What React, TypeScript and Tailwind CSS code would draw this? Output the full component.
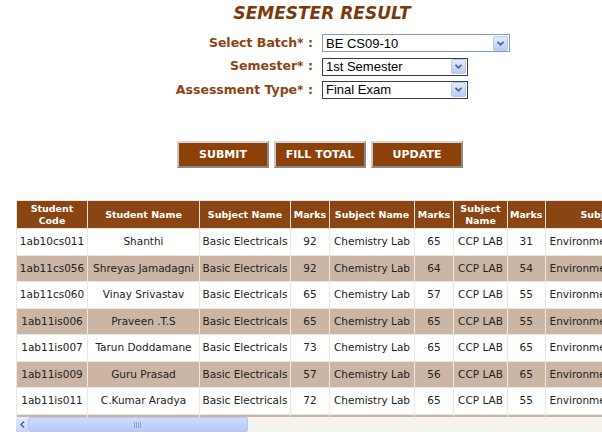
import type { FC } from "react";

const rows: string[][] = [
  ["1ab10cs011", "Shanthi", "92", "65", "31"],
  ["1ab11cs056", "Shreyas Jamadagni", "92", "64", "54"],
  ["1ab11cs060", "Vinay Srivastav", "65", "57", "55"],
  ["1ab11is006", "Praveen .T.S", "65", "65", "55"],
  ["1ab11is007", "Tarun Doddamane", "73", "65", "65"],
  ["1ab11is009", "Guru Prasad", "57", "56", "65"],
  ["1ab11is011", "C.Kumar Aradya", "72", "65", "55"],
  ["1ab11is012", "Manoj Kumar", "68", "60", "58"],
];

const ArrowBtn: FC = () => (
  <span className="flex h-[15px] w-[15px] items-center justify-center rounded-[2px] border border-[#b7c9ef] bg-gradient-to-b from-[#e2eafe] to-[#b9cdf7]">
    <svg width="7" height="5" viewBox="0 0 7 5">
      <path d="M0.5 0.8 L3.5 3.8 L6.5 0.8" fill="none" stroke="#4d6185" strokeWidth="1.6" />
    </svg>
  </span>
);

const FakeSelect: FC<{ value: string; width: string; light?: boolean }> = ({ value, width, light }) => (
  <div
    className={`flex h-[18px] items-center justify-between bg-white pl-[3px] pr-px font-normal ${width} border ${
      light ? "border-[#7f9db9]" : "border-[#3c3c3c]"
    }`}
  >
    <span className="text-[13px] leading-none text-black" style={{ fontFamily: '"Liberation Sans", Arial, sans-serif' }}>
      {value}
    </span>
    <ArrowBtn />
  </div>
);

const ActionButton: FC<{ label: string }> = ({ label }) => (
  <button className="h-[27px] w-[92px] border-2 border-t-[#d8d8d8] border-l-[#c8c8c8] border-b-[#8a8a8a] border-r-[#8a8a8a] bg-[#8b4108] text-[11px] font-bold text-white">
    {label}
  </button>
);

const headers = [
  { label: "Student\nCode", w: "w-[71px]" },
  { label: "Student Name", w: "w-[112px]" },
  { label: "Subject Name", w: "w-[91px]" },
  { label: "Marks", w: "w-[39px]" },
  { label: "Subject Name", w: "w-[85px]" },
  { label: "Marks", w: "w-[39px]" },
  { label: "Subject\nName", w: "w-[54px]" },
  { label: "Marks", w: "w-[36px]" },
  { label: "Subject Name", w: "w-[145px]" },
];

const cell = "whitespace-nowrap border border-[#efe6de] text-center";

export default function App() {
  return (
    <div className="h-[435px] w-[602px] overflow-hidden bg-white" style={{ fontFamily: '"DejaVu Sans", Verdana, sans-serif' }}>
      <h1 className="pt-[2px] text-center text-[17px] font-bold italic leading-[22px] text-[#7b3a0c]">
        <span className="pl-[42px]">SEMESTER RESULT</span>
      </h1>

      <div className="mt-[10px] grid grid-cols-[150px_auto] items-center gap-x-[9px] gap-y-[4.5px] pl-[163px] text-[12.5px] font-bold text-[#8b4513]">
        <span className="text-right">Select Batch* :</span>
        <FakeSelect value="BE CS09-10" width="w-[188px]" light />
        <span className="text-right">Semester* :</span>
        <FakeSelect value="1st Semester" width="w-[146px]" />
        <span className="text-right">Assessment Type* :</span>
        <FakeSelect value="Final Exam" width="w-[146px]" />
      </div>

      <div className="mt-[42px] flex gap-[5px] pl-[177px]">
        <ActionButton label="SUBMIT" />
        <ActionButton label="FILL TOTAL" />
        <ActionButton label="UPDATE" />
      </div>

      <div className="ml-[16px] mt-[32px] w-[700px]">
        <div className="h-[217px] overflow-hidden">
          <table className="table-fixed border-collapse text-[10.5px]">
            <thead>
              <tr className="h-[28px] bg-[#8b4513] text-white">
                {headers.map((h, i) => (
                  <th
                    key={i}
                    className={`${h.w} whitespace-pre-line border border-[#ece2d8] px-[2px] text-center text-[9.5px] leading-[12px] font-bold`}
                  >
                    {h.label}
                  </th>
                ))}
              </tr>
            </thead>
            <tbody>
              {rows.map((r, i) => (
                <tr key={i} className={`h-[26.5px] ${i % 2 === 1 ? "bg-[#cbb5a5]" : "bg-white"} text-[#222]`}>
                  <td className={cell}>{r[0]}</td>
                  <td className={cell}>{r[1]}</td>
                  <td className={cell}>Basic Electricals</td>
                  <td className={cell}>{r[2]}</td>
                  <td className={cell}>Chemistry Lab</td>
                  <td className={cell}>{r[3]}</td>
                  <td className={cell}>CCP LAB</td>
                  <td className={cell}>{r[4]}</td>
                  <td className="whitespace-nowrap border border-[#efe6de] pl-[4px] text-left">Environmental Studies</td>
                </tr>
              ))}
            </tbody>
          </table>
        </div>

        {/* horizontal scrollbar */}
        <div className="flex h-[15px] items-stretch bg-[#f4f3ee]">
          <div className="flex w-[12px] items-center justify-center bg-gradient-to-b from-[#e4ecfd] to-[#c3d4f8]">
            <svg width="5" height="7" viewBox="0 0 5 7">
              <path d="M4 0.5 L1 3.5 L4 6.5" fill="none" stroke="#4d6185" strokeWidth="1.5" />
            </svg>
          </div>
          <div className="flex w-[220px] items-center justify-center rounded-[2px] border border-[#b4c8f2] bg-gradient-to-b from-[#cddcfd] to-[#b8cbf5]">
            <svg width="8" height="6" viewBox="0 0 8 6">
              <path d="M0.5 0 V6 M2.5 0 V6 M4.5 0 V6 M6.5 0 V6" stroke="#8ea4d6" strokeWidth="1" />
            </svg>
          </div>
          <div className="flex-1" />
        </div>
      </div>
    </div>
  );
}
